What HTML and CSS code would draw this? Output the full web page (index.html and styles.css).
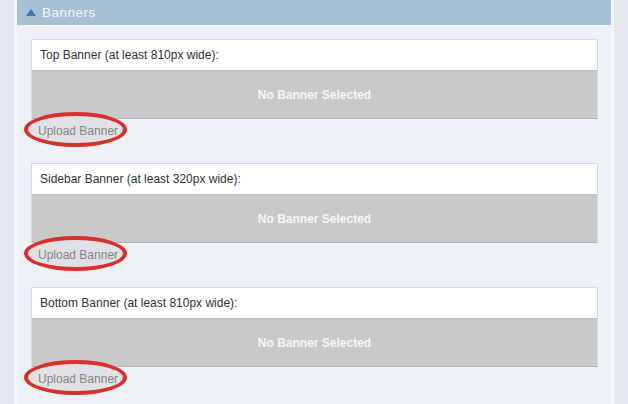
FILE: index.html
```html
<!DOCTYPE html>
<html>
<head>
<meta charset="utf-8">
<link rel="stylesheet" href="styles.css">
</head>
<body>
<div class="page">
  <div class="panel">
    <div class="panel-head"><span class="tri"></span><span class="title">Banners</span></div>
    <div class="panel-body">
      <div class="banner">
        <div class="box">
          <div class="label">Top Banner (at least 810px wide):</div>
          <div class="preview">No Banner Selected</div>
        </div>
        <div class="upload-row"><a class="upload">Upload Banner</a></div>
      </div>
      <div class="banner">
        <div class="box">
          <div class="label">Sidebar Banner (at least 320px wide):</div>
          <div class="preview">No Banner Selected</div>
        </div>
        <div class="upload-row"><a class="upload">Upload Banner</a></div>
      </div>
      <div class="banner">
        <div class="box">
          <div class="label">Bottom Banner (at least 810px wide):</div>
          <div class="preview">No Banner Selected</div>
        </div>
        <div class="upload-row"><a class="upload">Upload Banner</a></div>
      </div>
    </div>
  </div>
</div>
</body>
</html>
```

FILE: styles.css
```css
html, body {
  margin: 0;
  padding: 0;
  height: 100%;
}
body {
  background: #e3e9ef;
  font-family: "Liberation Sans", Arial, sans-serif;
  font-size: 12px;
  overflow: hidden;
}
.page {
  display: flex;
  height: 100%;
  padding-left: 14px;
  padding-right: 14px;
}
.panel {
  flex: 1;
  border-left: 3px solid #f4f7fa;
  border-right: 3px solid #f4f7fa;
  background: #eef2f6;
  display: flex;
  flex-direction: column;
}
.panel-head {
  flex-shrink: 0;
  height: 25px;
  background: #a7c0d3;
  display: flex;
  align-items: center;
  padding-left: 9px;
}
.tri {
  width: 0;
  height: 0;
  border-left: 5px solid transparent;
  border-right: 5px solid transparent;
  border-bottom: 7px solid #3d7ab3;
  margin-right: 6px;
  margin-top: -1px;
}
.title {
  color: #f4f8fb;
  font-size: 13.5px;
  letter-spacing: 0.5px;
}
.panel-body {
  flex-shrink: 0;
  padding: 14px 13px 0 14px;
}
.banner {
  margin-bottom: 24px;
}
.box {
  border: 1px solid #d6dbe0;
  border-bottom: 1px solid #b3b3b3;
}
.label {
  height: 30px;
  background: #ffffff;
  color: #333333;
  display: flex;
  align-items: center;
  padding-left: 8px;
  border-bottom: 1px solid #c0c0c0;
}
.preview {
  height: 47px;
  background: #c9c9c9;
  color: #f6f6f6;
  font-weight: bold;
  display: flex;
  align-items: center;
  justify-content: center;
}
.upload-row {
  margin-top: 4px;
  height: 16px;
  line-height: 16px;
  padding-left: 7px;
}
.upload {
  position: relative;
  z-index: 0;
  display: inline-block;
  color: #858585;
}
.upload::before {
  content: "";
  position: absolute;
  left: -14px;
  top: -11px;
  width: 95px;
  height: 27px;
  border: 4.5px solid #d9302b;
  border-radius: 50%;
  background: #dfe1e4;
  z-index: -1;
}
```
